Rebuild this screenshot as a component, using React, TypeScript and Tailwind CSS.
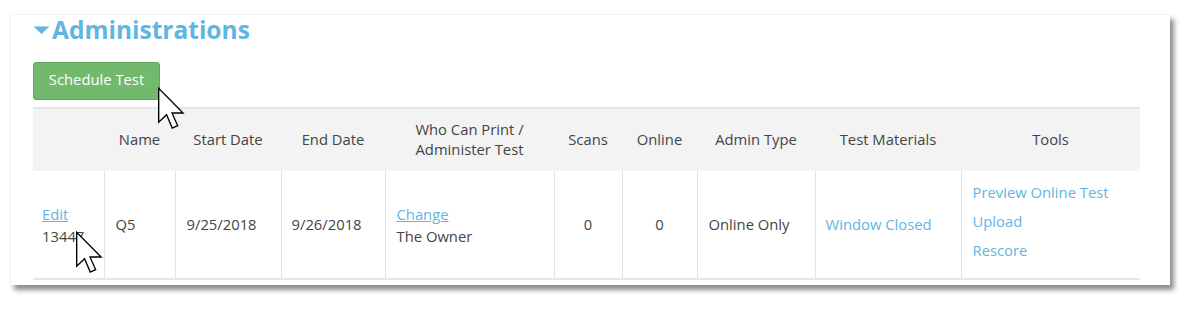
import React from 'react';

const cols = [71, 71, 106, 104, 169, 68, 75, 118, 146, 179];

function Cursor({ className }: { className: string }) {
    return (
        <svg className={`absolute ${className}`} width="30" height="44" viewBox="0 0 13 19.5" fill="none">
            <path
                d="M0.6 0.6 L0.6 15.6 L4.1 12.3 L6.6 18.2 L9 17.1 L6.5 11.5 L11.4 11.5 Z"
                fill="#ffffff"
                stroke="#000000"
                strokeWidth="0.6"
                strokeLinejoin="miter"
            />
        </svg>
    );
}

export default function App() {
    const headers = ['', 'Name', 'Start Date', 'End Date', 'Who Can Print / Administer Test', 'Scans', 'Online', 'Admin Type', 'Test Materials', 'Tools'];

    return (
        <div className="relative w-[1188px] h-[310px] bg-white font-['Open_Sans',sans-serif] text-[14.8px] text-[#444]">
            <div className="ml-[10px] pt-[14px]">
                <div className="w-[1160px] h-[271px] bg-white border-t border-l border-[#f0f0f0] shadow-[4px_5px_5px_rgba(0,0,0,0.45)] pl-[22px] pt-[1px]">
                    <h2 className="flex items-center h-[28px] text-[24.5px] font-bold text-[#5fb6e2] leading-[28px]">
                        <svg width="17" height="9" viewBox="0 0 17 9" className="mr-[2px] mt-[1px]">
                            <path d="M0.5 0.5 H16.5 L8.5 8 Z" fill="#5fb6e2" />
                        </svg>
                        Administrations
                    </h2>
                    <button className="mt-[18px] w-[127px] h-[38px] rounded-[3px] bg-[#72b96e] border border-[#5fa55b] text-white text-[14.8px] leading-none pb-[3px]">
                        Schedule Test
                    </button>
                    <table className="mt-[7px] border-collapse table-fixed w-[1107px]">
                        <colgroup>
                            {cols.map((w, i) => (
                                <col key={i} style={{ width: w }} />
                            ))}
                        </colgroup>
                        <thead>
                            <tr className="h-[63px] bg-[#f3f3f3] border-t-2 border-[#e6e6e6]">
                                {headers.map((h, i) => (
                                    <th key={i} className="font-normal text-center leading-[20px] px-1 pb-[2px]">
                                        {h === 'Who Can Print / Administer Test' ? (
                                            <>Who Can Print /<br />Administer Test</>
                                        ) : h}
                                    </th>
                                ))}
                            </tr>
                        </thead>
                        <tbody>
                            <tr className="h-[108px] border-b-2 border-[#e6e6e6] text-[#444]">
                                <td className="border-r border-[#e2e2e2] pl-[9px] leading-[22px]">
                                    <a className="text-[#5fb6e2] underline block">Edit</a>
                                    <span className="block">13447</span>
                                </td>
                                <td className="border-r border-[#e2e2e2] pl-[11px]">Q5</td>
                                <td className="border-r border-[#e2e2e2] pl-[11px]">9/25/2018</td>
                                <td className="border-r border-[#e2e2e2] pl-[10px]">9/26/2018</td>
                                <td className="border-r border-[#e2e2e2] pl-[11px] leading-[22px]">
                                    <a className="text-[#5fb6e2] underline block">Change</a>
                                    <span className="block">The Owner</span>
                                </td>
                                <td className="border-r border-[#e2e2e2] text-center">0</td>
                                <td className="border-r border-[#e2e2e2] text-center">0</td>
                                <td className="border-r border-[#e2e2e2] pl-[11px]">Online Only</td>
                                <td className="border-r border-[#e2e2e2] pl-[10px]">
                                    <a className="text-[#5fb6e2]">Window Closed</a>
                                </td>
                                <td className="pl-[11px] pb-[8px]">
                                    <div className="flex flex-col gap-[7px] leading-[22px] text-[#5fb6e2]">
                                        <a>Preview Online Test</a>
                                        <a>Upload</a>
                                        <a>Rescore</a>
                                    </div>
                                </td>
                            </tr>
                        </tbody>
                    </table>
                </div>
            </div>
            <Cursor className="left-[157px] top-[87px]" />
            <Cursor className="left-[75px] top-[231px]" />
        </div>
    );
}
